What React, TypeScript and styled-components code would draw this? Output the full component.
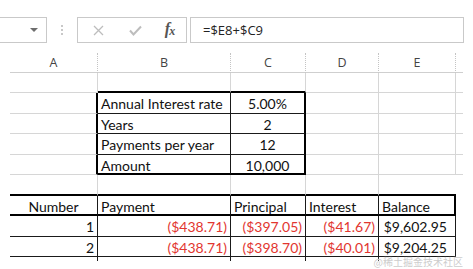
import React from 'react';
import styled, { createGlobalStyle } from 'styled-components';

const GlobalStyle = createGlobalStyle`
  body {
    margin: 0;
    background: #fff;
  }
`;

type Line = 'g' | 'k' | 'K' | 'n';
type Align = 'left' | 'center' | 'right';

const lines: Record<Line, string> = {
  g: '1px solid #d6d6d6',
  k: '1px solid #1a1a1a',
  K: '2px solid #000',
  n: 'none',
};

const Page = styled.div`
  position: relative;
  width: 473px;
  height: 269px;
  overflow: hidden;
  padding-top: 17px;
  box-sizing: border-box;
  font-family: 'Open Sans', 'Noto Sans', sans-serif;
`;

const FormulaBar = styled.div`
  display: flex;
  height: 26px;
  width: 464px;
`;

const NameBox = styled.div`
  margin-left: -1px;
  width: 48px;
  box-sizing: border-box;
  border: 1px solid #c9c9c9;
  display: flex;
  align-items: center;
  justify-content: flex-end;
  padding-right: 8px;
`;

const Caret = styled.span`
  width: 0;
  height: 0;
  border-left: 4px solid transparent;
  border-right: 4px solid transparent;
  border-top: 4px solid #6d6d6d;
`;

const Grip = styled.div`
  width: 30px;
  display: flex;
  flex-direction: column;
  align-items: center;
  justify-content: center;
  gap: 2px;

  span {
    width: 2px;
    height: 2px;
    background: #c8c8c8;
  }
`;

const ButtonBox = styled.div`
  width: 110px;
  box-sizing: border-box;
  border: 1px solid #c9c9c9;
  display: grid;
  grid-template-columns: 38px 36px 1fr;
  align-items: center;
  justify-items: center;
  padding-left: 1px;
`;

const Fx = styled.span`
  font-family: 'Liberation Serif', 'DejaVu Serif', serif;
  font-style: italic;
  font-weight: bold;
  font-size: 16px;
  color: #555;
  letter-spacing: -1px;
  margin-bottom: 2px;

  sub {
    font-size: 12px;
    vertical-align: -1px;
  }
`;

const FormulaInput = styled.div`
  margin-left: 3px;
  flex: 1;
  box-sizing: border-box;
  border: 1px solid #c9c9c9;
  padding-left: 12px;
  font-size: 13px;
  color: #222;
  display: flex;
  align-items: center;
`;

const Sheet = styled.div`
  margin: 10px 0 0 10px;
  display: grid;
  grid-template-columns: 88px 133px 75px 73px 77px 7px;
  grid-template-rows: 19.7px repeat(9, 20.5px) 4px;
`;

const ColHead = styled.div<{ $last?: boolean }>`
  box-sizing: border-box;
  border-bottom: 1px solid #cfcfcf;
  border-right: ${(p) => (p.$last ? 'none' : '1px dotted #c4c4c4')};
  font-size: 12.5px;
  color: #444;
  display: flex;
  align-items: center;
  justify-content: center;
  padding-top: 1px;
`;

const Cell = styled.div<{ $r: Line; $b: Line; $align: Align; $red?: boolean; $pr?: number }>`
  box-sizing: border-box;
  border-right: ${(p) => lines[p.$r]};
  border-bottom: ${(p) => lines[p.$b]};
  font-family: Lato, 'Open Sans', sans-serif;
  font-size: 14px;
  color: ${(p) => (p.$red ? '#e2362f' : '#111')};
  text-align: ${(p) => p.$align};
  padding: 2px ${(p) => p.$pr ?? 3}px 0 3px;
  white-space: nowrap;
  overflow: hidden;
  line-height: 18px;
`;

const Watermark = styled.div`
  position: absolute;
  right: 10px;
  bottom: 2px;
  font-family: 'Noto Sans CJK SC', sans-serif;
  font-size: 10px;
  line-height: 11px;
  color: #cdcdcd;
  text-shadow: 0 0 2px #fff;
`;

type Spec = [string, Line, Line, Align?, boolean?, number?];

const empty = (r: Line, b: Line): Spec => ['', r, b];

const rows: Spec[][] = [
  [empty('g', 'g'), empty('g', 'K'), empty('g', 'K'), empty('g', 'g'), empty('g', 'g'), empty('n', 'g')],
  [empty('K', 'g'), ['Annual Interest rate', 'k', 'k'], ['5.00%', 'K', 'k', 'center'], empty('g', 'g'), empty('g', 'g'), empty('n', 'g')],
  [empty('K', 'g'), ['Years', 'k', 'k'], ['2', 'K', 'k', 'center'], empty('g', 'g'), empty('g', 'g'), empty('n', 'g')],
  [empty('K', 'g'), ['Payments per year', 'k', 'k'], ['12', 'K', 'k', 'center'], empty('g', 'g'), empty('g', 'g'), empty('n', 'g')],
  [empty('K', 'g'), ['Amount', 'k', 'K'], ['10,000', 'K', 'K', 'center'], empty('g', 'g'), empty('g', 'g'), empty('n', 'g')],
  [empty('g', 'K'), empty('g', 'K'), empty('g', 'K'), empty('g', 'K'), empty('n', 'K'), empty('n', 'n')],
  [
    ['Number', 'k', 'K', 'center'],
    ['Payment', 'k', 'K'],
    ['Principal', 'k', 'K'],
    ['Interest', 'k', 'K'],
    ['Balance', 'K', 'K'],
    empty('n', 'n'),
  ],
  [
    ['1', 'k', 'k', 'right'],
    ['($438.71)', 'k', 'k', 'right', true],
    ['($397.05)', 'k', 'k', 'right', true],
    ['($41.67)', 'k', 'k', 'right', true],
    ['$9,602.95', 'k', 'k', 'right', false, 8],
    empty('n', 'n'),
  ],
  [
    ['2', 'k', 'k', 'right'],
    ['($438.71)', 'k', 'k', 'right', true],
    ['($398.70)', 'k', 'k', 'right', true],
    ['($40.01)', 'k', 'k', 'right', true],
    ['$9,204.25', 'k', 'k', 'right', false, 8],
    empty('n', 'n'),
  ],
  [empty('k', 'n'), empty('k', 'n'), empty('k', 'n'), empty('k', 'n'), empty('n', 'n'), empty('n', 'n')],
];

const App = () => {
  return (
    <Page>
      <GlobalStyle />
      <FormulaBar>
        <NameBox>
          <Caret />
        </NameBox>
        <Grip>
          <span />
          <span />
          <span />
        </Grip>
        <ButtonBox>
          <svg width="11" height="11" viewBox="0 0 11 11">
            <path d="M1 1 L10 10 M10 1 L1 10" stroke="#bdbdbd" strokeWidth="1.3" fill="none" />
          </svg>
          <svg width="13" height="11" viewBox="0 0 13 11">
            <path d="M1 5.5 L4.5 9.5 L12 1.5" stroke="#bdbdbd" strokeWidth="2" fill="none" />
          </svg>
          <Fx>
            f<sub>x</sub>
          </Fx>
        </ButtonBox>
        <FormulaInput>=$E8+$C9</FormulaInput>
      </FormulaBar>
      <Sheet>
        {['A', 'B', 'C', 'D', 'E', ''].map((h, i) => (
          <ColHead key={i} $last={i === 5}>
            {h}
          </ColHead>
        ))}
        {rows.map((row, ri) =>
          row.map(([text, r, b, align = 'left', red, pr], ci) => (
            <Cell key={`${ri}-${ci}`} $r={r} $b={b} $align={align} $red={red} $pr={pr}>
              {text}
            </Cell>
          )),
        )}
      </Sheet>
      <Watermark>@稀土掘金技术社区</Watermark>
    </Page>
  );
};

export default App;
